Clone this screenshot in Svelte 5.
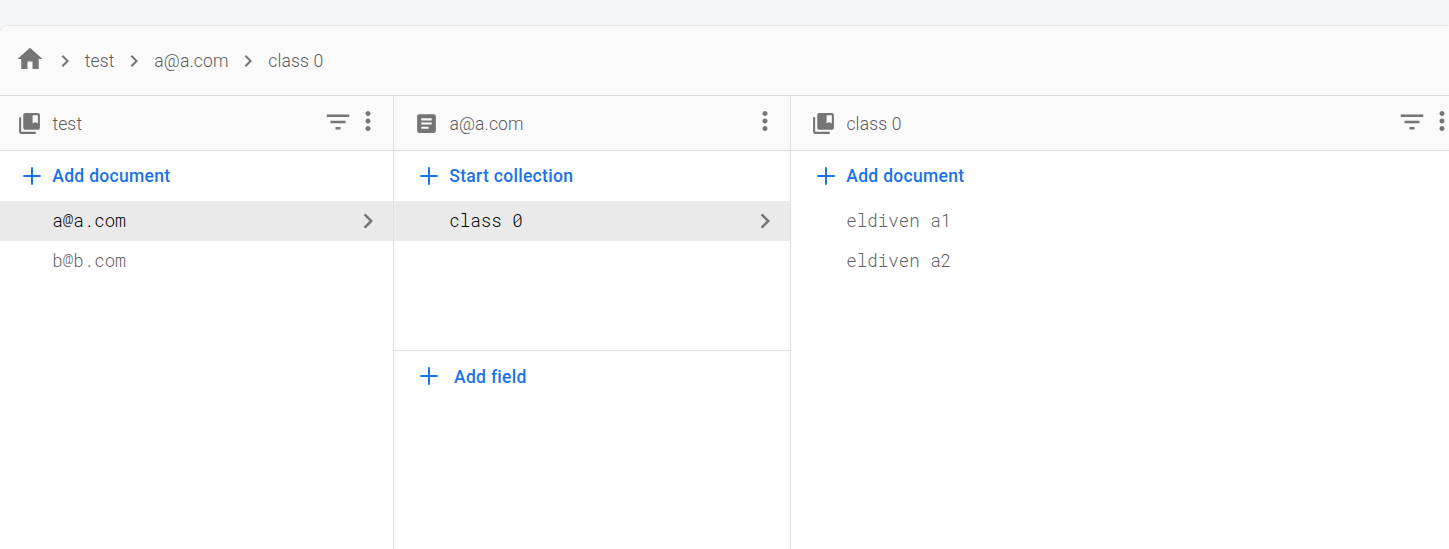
<script>
  const paths = {
    home: 'M10 20v-6h4v6h5v-8h3L12 3 2 12h3v8z',
    chevron: 'M10 6L8.59 7.41 13.17 12l-4.58 4.59L10 18l6-6z',
    collection: 'M4 6H2v14c0 1.1.9 2 2 2h14v-2H4V6zM20 2H8c-1.1 0-2 .9-2 2v12c0 1.1.9 2 2 2h12c1.1 0 2-.9 2-2V4c0-1.1-.9-2-2-2zm0 10l-2.5-1.5L15 12V4h5v8z',
    document: 'M19 3H5c-1.1 0-2 .9-2 2v14c0 1.1.9 2 2 2h14c1.1 0 2-.9 2-2V5c0-1.1-.9-2-2-2zm-5 14H7v-2h7v2zm3-4H7v-2h10v2zm0-4H7V7h10v2z',
    filter: 'M10 18h4v-2h-4v2zM3 6v2h18V6H3zm3 7h12v-2H6v2z',
    more: 'M12 8c1.1 0 2-.9 2-2s-.9-2-2-2-2 .9-2 2 .9 2 2 2zm0 2c-1.1 0-2 .9-2 2s.9 2 2 2 2-.9 2-2-.9-2-2-2zm0 6c-1.1 0-2 .9-2 2s.9 2 2 2 2-.9 2-2-.9-2-2-2z',
    plus: 'M19 12.8h-6.2V19h-1.6v-6.2H5v-1.6h6.2V5h1.6v6.2H19z'
  };
  const crumbs = ['test', 'a@a.com', 'class 0'];
  const columns = [
    { title: 'test', icon: 'collection', filter: true, action: 'Add document', rows: ['a@a.com', 'b@b.com'], selected: 'a@a.com' },
    { title: 'a@a.com', icon: 'document', filter: false, action: 'Start collection', rows: ['class 0'], selected: 'class 0', fields: true },
    { title: 'class 0', icon: 'collection', filter: true, action: 'Add document', rows: ['eldiven a1', 'eldiven a2'], selected: null }
  ];
</script>

{#snippet icon(name, size)}
  <svg class="icon {name}" width={size} height={size} viewBox="0 0 24 24" aria-hidden="true"><path d={paths[name]} /></svg>
{/snippet}

<main>
  <section class="card">
    <nav>
      {@render icon('home', 30)}
      {#each crumbs as crumb}
        {@render icon('chevron', 24)}
        <span>{crumb}</span>
      {/each}
    </nav>
    <div class="panels">
      {#each columns as col}
        <div class="panel">
          <header>
            {@render icon(col.icon, 25)}
            <span class="title">{col.title}</span>
            <div class="tools">
              {#if col.filter}{@render icon('filter', 30)}{/if}
              {@render icon('more', 30)}
            </div>
          </header>
          <div class="top" class:split={col.fields}>
            <button>{@render icon('plus', 30)}<span>{col.action}</span></button>
            {#each col.rows as row}
              <div class="row" class:selected={row === col.selected}>
                <span>{row}</span>
                {#if row === col.selected}{@render icon('chevron', 30)}{/if}
              </div>
            {/each}
          </div>
          {#if col.fields}
            <button class="field">{@render icon('plus', 30)}<span>Add field</span></button>
          {/if}
        </div>
      {/each}
    </div>
  </section>
</main>

<style>
  :global(body) { background: #f6f7f9; overflow: hidden; }
  main {
    box-sizing: border-box;
    height: 549px;
    padding-top: 26px;
    overflow: hidden;
    font: 400 17.5px/24px Roboto, sans-serif;
    color: #757575;
  }
  .card {
    display: flex;
    flex-direction: column;
    height: 523px;
    border-radius: 8px 0 0 0;
    background: #fff;
    box-shadow: 0 0 2px rgba(0, 0, 0, 0.22);
    overflow: hidden;
  }
  .icon { display: block; flex: none; fill: #757575; }
  nav {
    box-sizing: border-box;
    display: flex;
    align-items: center;
    height: 70px;
    padding-left: 14.5px;
    background: #fafafa;
    border-bottom: 1px solid #dcdcdc;
    font-weight: 300;
    letter-spacing: 0.15px;
    color: #5c5c5c;
  }
  nav .home { margin-top: -3px; }
  nav .chevron { margin: 0 8px 0 7.7px; }
  nav .home + .chevron { margin-left: 8.3px; }
  .panels {
    flex: 1;
    display: grid;
    grid-template-columns: 394px 397px 676.5px;
  }
  .panel {
    --inset: 20px;
    box-sizing: border-box;
    border-right: 1px solid #e0e0e0;
  }
  .panel:first-child { --inset: 17px; }
  header {
    box-sizing: border-box;
    display: flex;
    align-items: center;
    height: 55px;
    padding: 0 10px 0 var(--inset);
    background: #fafafa;
    border-bottom: 1px solid #dcdcdc;
    font-weight: 300;
    letter-spacing: 0.15px;
    color: #5c5c5c;
  }
  .title { margin-left: 10.4px; padding-top: 2px; }
  .tools { display: flex; margin-left: auto; margin-top: -4px; }
  .filter { margin-top: 1px; }
  button {
    display: flex;
    align-items: center;
    width: 100%;
    height: 50px;
    padding: 0 0 0 var(--inset);
    border: 0;
    background: none;
    font: 500 17.5px/24px Roboto, sans-serif;
    letter-spacing: 0.3px;
    color: #1a73e8;
  }
  button .icon { fill: #1a73e8; }
  button span { margin-left: 5.3px; }
  .split {
    box-sizing: border-box;
    height: 200px;
    border-bottom: 1px solid #dcdcdc;
  }
  .field span { margin-left: 10px; padding-top: 2px; }
  .row {
    display: flex;
    align-items: center;
    justify-content: space-between;
    height: 40px;
    padding: 0 10.5px 0 calc(var(--inset) + 35.3px);
    font-family: "Roboto Mono", "Liberation Mono", monospace;
    font-weight: 300;
    color: #616161;
  }
  .selected { background: #eaeaea; color: #000; }
</style>
